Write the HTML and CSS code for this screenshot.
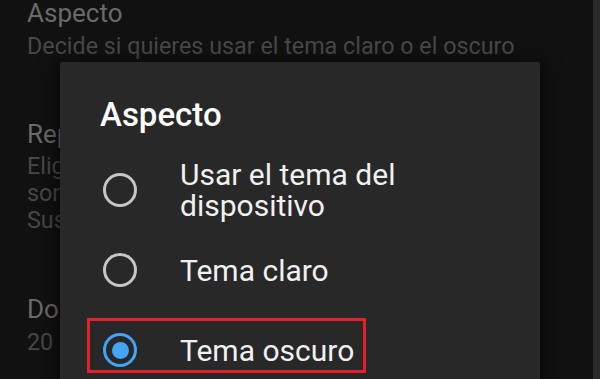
FILE: index.html
```html
<!DOCTYPE html>
<html lang="es">
<head>
<meta charset="utf-8">
<link rel="stylesheet" href="styles.css">
</head>
<body>
<div class="screen">
  <main class="settings">
    <section class="pref pref-first">
      <div class="pref-title">Aspecto</div>
      <div class="pref-desc">Decide si quieres usar el tema claro o el oscuro</div>
    </section>
    <section class="pref pref-second">
      <div class="pref-title">Reproducción en feeds</div>
      <div class="pref-desc">Elige si los vídeos se reproducen</div>
      <div class="pref-desc">sonido en Inicio, Búsqueda y</div>
      <div class="pref-desc">Suscripciones</div>
    </section>
    <section class="pref pref-third">
      <div class="pref-title">Doble toque para buscar</div>
      <div class="pref-desc">20 segundos</div>
    </section>
  </main>
  <div class="edge"></div>

  <div class="dialog" role="dialog" aria-labelledby="dlg-title">
    <h2 class="dialog-title" id="dlg-title">Aspecto</h2>
    <ul class="options">
      <li class="option">
        <span class="radio"></span>
        <span class="option-label">Usar el tema del<br>dispositivo</span>
      </li>
      <li class="option">
        <span class="radio"></span>
        <span class="option-label">Tema claro</span>
      </li>
      <li class="option option-selected">
        <span class="radio radio-on"></span>
        <span class="option-label">Tema oscuro</span>
        <span class="highlight"></span>
      </li>
    </ul>
  </div>
</div>
</body>
</html>
```

FILE: styles.css
```css
html, body {
  margin: 0;
  padding: 0;
  background: #111111;
}

body {
  font-family: Roboto, "Noto Sans", sans-serif;
  width: 600px;
  height: 379px;
  overflow: hidden;
}

.screen {
  position: relative;
  display: flex;
  width: 600px;
  height: 379px;
  overflow: hidden;
}

.settings {
  flex: 1;
  padding-left: 27px;
  white-space: nowrap;
  overflow: hidden;
}

.edge {
  width: 7px;
  background: #2a2a2a;
}

.pref-title {
  font-size: 26px;
  line-height: 26px;
  color: #6a6a6a;
}

.pref-desc {
  font-size: 23.3px;
  line-height: 27px;
  color: #484848;
}

.pref-first .pref-desc {
  margin-top: 7px;
}

.pref-second {
  margin-top: 61px;
}

.pref-second .pref-title + .pref-desc {
  margin-top: 6px;
}

.pref-third {
  margin-top: 62px;
}

.pref-third .pref-desc {
  margin-top: 7px;
}

.dialog {
  position: absolute;
  left: 60px;
  top: 62px;
  width: 480px;
  height: 340px;
  background: #282828;
  border-radius: 2px;
  box-shadow: 0 4px 18px 4px rgba(0, 0, 0, 0.55);
}

.dialog-title {
  margin: 0;
  padding: 33px 0 0 40px;
  font-size: 33px;
  line-height: 40px;
  font-weight: 500;
  color: #ffffff;
}

.options {
  list-style: none;
  margin: 15px 0 0;
  padding: 0;
}

.option {
  position: relative;
  display: flex;
  align-items: center;
  min-height: 80px;
  padding-left: 43px;
}

.radio {
  flex: none;
  box-sizing: border-box;
  width: 34px;
  height: 34px;
  border: 3.5px solid #c6c6c6;
  border-radius: 50%;
  margin-right: 43px;
  display: flex;
  align-items: center;
  justify-content: center;
}

.radio-on {
  border-color: #42a5f5;
}

.radio-on::after {
  content: "";
  width: 17px;
  height: 17px;
  border-radius: 50%;
  background: #42a5f5;
}

.option-label {
  font-size: 30px;
  line-height: 31px;
  color: #f0f0f0;
}

.highlight {
  position: absolute;
  left: 27px;
  top: 8px;
  width: 279px;
  height: 55px;
  box-sizing: border-box;
  border: 3px solid #e5202b;
}
```
